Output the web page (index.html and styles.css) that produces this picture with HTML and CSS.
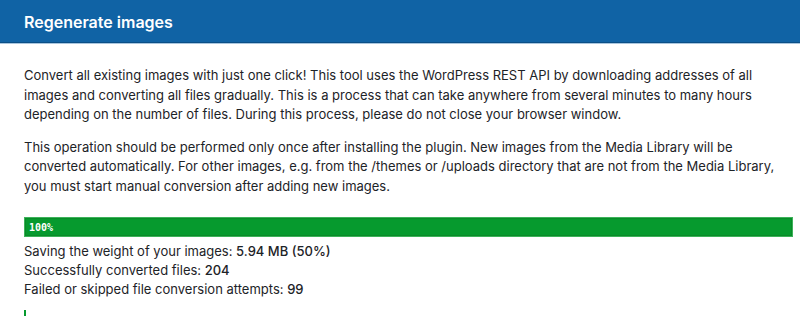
FILE: index.html
```html
<!DOCTYPE html>
<html>
<head>
<meta charset="utf-8">
<link rel="stylesheet" href="styles.css">
</head>
<body>
<div class="panel">
  <div class="header">Regenerate images</div>
  <div class="content">
    <p>Convert all existing images with just one click! This tool uses the WordPress REST API by downloading addresses of all images and converting all files gradually. This is a process that can take anywhere from several minutes to many hours depending on the number of files. During this process, please do not close your browser window.</p>
    <p>This operation should be performed only once after installing the plugin. New images from the Media Library will be converted automatically. For other images, e.g. from the /themes or /uploads directory that are not from the Media Library, you must start manual conversion after adding new images.</p>
    <div class="progress"><span class="progress-label">100%</span></div>
    <div class="stats">
      <div>Saving the weight of your images: <strong>5.94 MB (50%)</strong></div>
      <div>Successfully converted files: <strong>204</strong></div>
      <div>Failed or skipped file conversion attempts: <strong>99</strong></div>
    </div>
    <div class="mini-bar"></div>
  </div>
</div>
</body>
</html>
```
FILE: styles.css
```css
html, body {
  margin: 0;
  padding: 0;
  background: #fff;
}
body {
  font-family: Inter, "Noto Sans", sans-serif;
  color: #1d2327;
  font-size: 13px;
  overflow: hidden;
}
.header {
  background: #1063a5;
  color: #fff;
  font-size: 16px;
  font-weight: 600;
  height: 42px;
  line-height: 44px;
  padding: 0 24px;
  border-bottom: 1px solid #0b4f86;
  box-shadow: 0 1px 0 #a9c6de;
}
.content {
  padding: 23px 24px 0 24px;
}
.content p {
  margin: 0 0 13px 0;
  line-height: 19.5px;
}
.progress {
  margin-top: 21px;
  height: 18px;
  width: 767px;
  background: #069a2e;
  border: 1px solid #3cb35a;
  box-shadow: inset 0 0 0 1px #0a8a28;
  display: flex;
  align-items: center;
}
.progress-label {
  font-family: "DejaVu Sans Mono", monospace;
  font-size: 10px;
  font-weight: bold;
  color: #fff;
  padding-left: 4px;
}
.stats {
  margin-top: 5px;
  line-height: 19px;
}
.stats strong {
  font-weight: 450;
}
.mini-bar {
  margin-top: 11px;
  width: 2px;
  height: 7px;
  background: #069a2e;
}
```
